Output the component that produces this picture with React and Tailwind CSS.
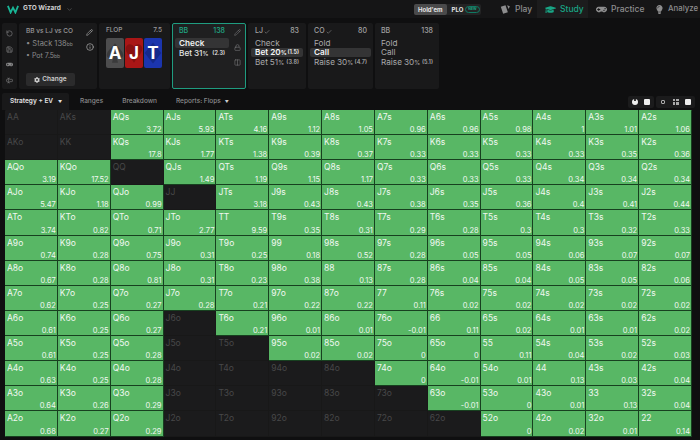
import { ChevronDown, Columns2, Info, Lock, Pencil, RotateCcw, Save, TextCursorInput, Check } from 'lucide-react'
import { FaCog, FaGamepad, FaGraduationCap, FaLightbulb } from 'react-icons/fa'

const ranks = ['A', 'K', 'Q', 'J', 'T', '9', '8', '7', '6', '5', '4', '3', '2']

const ev = [
  [null, null, '3.72', '5.93', '4.16', '1.12', '1.05', '0.96', '0.96', '0.98', '1', '1.01', '1.06'],
  [null, null, '17.8', '1.77', '1.38', '0.39', '0.37', '0.33', '0.33', '0.33', '0.33', '0.35', '0.36'],
  ['3.19', '17.52', null, '1.49', '1.19', '1.15', '1.17', '0.33', '0.33', '0.33', '0.34', '0.34', '0.34'],
  ['5.47', '1.18', '0.99', null, '3.18', '0.43', '0.43', '0.38', '0.35', '0.36', '0.4', '0.41', '0.44'],
  ['3.74', '0.82', '0.71', '2.77', '9.59', '0.35', '0.31', '0.29', '0.28', '0.3', '0.3', '0.32', '0.33'],
  ['0.74', '0.28', '0.75', '0.31', '0.25', '0.18', '0.52', '0.28', '0.05', '0.05', '0.06', '0.07', '0.07'],
  ['0.67', '0.28', '0.81', '0.31', '0.23', '0.38', '0.13', '0.28', '0.04', '0.04', '0.05', '0.05', '0.06'],
  ['0.62', '0.25', '0.27', '0.28', '0.21', '0.22', '0.22', '0.11', '0.02', '0.02', '0.02', '0.02', '0.02'],
  ['0.61', '0.25', '0.27', null, '0.21', '0.01', '0.01', '-0.01', '0.11', '0.02', '0.01', '0.01', '0.02'],
  ['0.61', '0.25', '0.28', null, null, '0.02', '0.02', '0', '0', '0.11', '0.04', '0.02', '0.03'],
  ['0.63', '0.25', '0.28', null, null, null, null, '0', '-0.01', '0.01', '0.13', '0.03', '0.04'],
  ['0.64', '0.26', '0.29', null, null, null, null, null, '-0.01', '0', '0.01', '0.13', '0.04'],
  ['0.68', '0.27', '0.29', null, null, null, null, null, null, '0', '0.02', '0.01', '0.14'],
]

function handLabel(row, col) {
  if (row === col) return ranks[row] + ranks[col]
  if (row < col) return ranks[row] + ranks[col] + 's'
  return ranks[col] + ranks[row] + 'o'
}

function Cell({ label, value }) {
  if (value === null) {
    return (
      <div className="min-w-0 border-r border-b border-[#181818] bg-[#1b1b1c] px-[2px] pt-[1px] text-[8.5px] leading-[13px] text-[#484849]">
        {label}
      </div>
    )
  }
  return (
    <div className="flex min-w-0 flex-col justify-between border-r border-b border-[#17401f] bg-[#58b765] pt-[1px] pr-[1px] pl-[2px] text-[#f1f7f1]">
      <span className="text-[8.5px] leading-[13px]">{label}</span>
      <span className="text-right text-[7.5px] leading-[9px]">{value}</span>
    </div>
  )
}

function ActionRow({ name, pct, size, active, dim, wide }) {
  return (
    <div className={`flex h-[9.5px] items-center justify-between rounded-[2px] text-[8.2px] whitespace-nowrap ${wide ? '-mx-[4px] px-[4px]' : ''} ${active ? 'bg-[#343435] font-semibold text-[#f4f4f4]' : ''} ${dim ? 'text-[#a9a9aa]' : ''} ${!active && !dim ? 'font-medium text-[#e4e4e4]' : ''}`}>
      <span>
        {name}
        {pct && <span className="ml-[2px]">{pct}<span className="text-[6px]">%</span></span>}
      </span>
      {size && <span className="text-[5.5px] font-semibold">({size})</span>}
    </div>
  )
}

function PlayerHead({ name, stack, checked, teal }) {
  return (
    <div className={`mb-[1px] flex h-[11px] items-center justify-between text-[7px] font-medium ${teal ? 'text-[#1fa886]' : 'text-[#a3a3a4]'}`}>
      <span className="flex items-center gap-[1px]">
        {name}
        {checked && <Check size={6} strokeWidth={2} />}
      </span>
      <span>{stack}</span>
    </div>
  )
}

function BoardCard({ rank, bg, shade, path }) {
  return (
    <div className={`flex h-[30px] w-[18px] items-center justify-center overflow-hidden rounded-[2px] ${bg}`}>
      <span className="grid place-items-center">
        <svg viewBox="0 0 24 30" className={`col-start-1 row-start-1 h-[30px] w-[18px] ${shade}`} fill="currentColor">
          <path d={path} />
        </svg>
        <span className="col-start-1 row-start-1 text-[17px] leading-none font-bold text-white">{rank}</span>
      </span>
    </div>
  )
}

export default function App() {
  return (
    <div className="h-[440px] w-[700px] overflow-hidden bg-[#0f0f10] font-['Inter',sans-serif]">
      <header className="flex h-[18px] items-center justify-between bg-[#151516]">
        <div className="flex items-center pl-[7px]">
          <svg viewBox="0 0 20 14" className="h-[9px] w-[12px]" fill="none" stroke="#19b596" strokeWidth="3">
            <path d="M1.5 1 L6 12 L10 4 L14 12 L18.5 1" />
          </svg>
          <span className="ml-[4px] text-[6.5px] font-bold text-[#d0d0d0]">GTO Wizard</span>
          <ChevronDown size={7} className="ml-[5px] text-[#666]" />
        </div>
        <div className="flex items-center">
          <div className="flex h-[11px] w-[67px] items-center rounded-[2px] bg-[#232324] text-[6px] font-bold">
            <span className="flex h-[11px] items-center rounded-[2px] bg-[#4a4a4b] px-[4px] text-[#e6e6e6]">Hold'em</span>
            <span className="ml-[5px] text-[#e6e6e6]">PLO</span>
            <span className="ml-[2px] rounded-full border border-[#0f7a63] px-[2px] text-[3.5px] leading-[5px] text-[#19a585]">NEW</span>
          </div>
          <div className="flex h-[18px] w-[56px] items-center gap-[4px] pl-[19px] text-[8.5px] font-medium text-[#8d8d8e]">
            <svg viewBox="0 0 14 14" className="h-[11px] w-[11px] shrink-0" fill="#8d8d8e">
              <path d="M1 3.5 L7 1.5 L10 10.5 L4 12.5 Z" />
              <path d="M9 1.5 L12.5 3 L11 6.5 Z" />
            </svg>
            <span>Play</span>
          </div>
          <div className="flex h-[18px] w-[51px] items-center gap-[4px] bg-[#1c1c1d] pl-[8px] text-[8.5px] font-medium text-[#19a585]">
            <FaGraduationCap size={11} className="shrink-0" />
            <span>Study</span>
          </div>
          <div className="flex h-[18px] w-[59px] items-center gap-[4px] pl-[8px] text-[8.5px] font-medium text-[#8d8d8e]">
            <FaGamepad size={11} className="shrink-0" />
            <span>Practice</span>
          </div>
          <div className="flex h-[18px] w-[53px] items-center gap-[4px] pl-[8px] text-[7.8px] font-medium whitespace-nowrap text-[#8d8d8e]">
            <FaLightbulb size={9} className="shrink-0" />
            <span>Analyze</span>
          </div>
        </div>
      </header>

      <section className="mt-[5px] flex h-[66px] gap-[2px] pl-[2px]">
        <div className="flex w-[15px] flex-col items-center gap-[8.5px] rounded-[2px] bg-[#19191a] pt-[7px] text-[#8a8a8b]">
          <RotateCcw size={7} />
          <Save size={7} />
          <FaGamepad size={7} />
          <TextCursorInput size={7} />
        </div>

        <div className="flex w-[78px] rounded-[2px] bg-[#19191a]">
          <div className="flex w-[63px] flex-col justify-between pt-[3px] pb-[3px] pl-[7px]">
            <div>
              <p className="text-[6.5px] leading-[11px] font-medium whitespace-nowrap text-[#9a9a9b]">BB vs LJ vs CO</p>
              <p className="mt-[1px] text-[7.5px] leading-[11px] whitespace-nowrap text-[#8b8b8c]">• Stack 138<span className="text-[5px]">bb</span></p>
              <p className="text-[7px] leading-[11px] whitespace-nowrap text-[#8b8b8c]">• Pot 7.5<span className="text-[5px]">bb</span></p>
            </div>
            <div className="flex h-[13px] w-[49px] items-center justify-center gap-[2px] rounded-[2px] bg-[#2b2b2c] text-[6.5px] font-semibold text-[#cfcfcf]">
              <FaCog size={6} />
              Change
            </div>
          </div>
          <div className="flex w-[15px] flex-col items-center gap-[7px] pt-[6px] text-[#b5b5b5]">
            <Pencil size={7} />
            <Info size={8} />
          </div>
        </div>

        <div className="w-[71px] rounded-[2px] bg-[#19191a] px-[7px]">
          <div className="flex h-[15px] items-center justify-between pr-[1px] text-[6.5px] font-medium text-[#9a9a9b]">
            <span>FLOP</span>
            <span>7.5</span>
          </div>
          <div className="flex gap-[1px]">
            <BoardCard rank="A" bg="bg-[#4d4d4e]" shade="text-[#3a3a3b]" path="M12 2 C16 8 23 12 23 18 C23 22 17 23 14 20 L16 28 L8 28 L10 20 C7 23 1 22 1 18 C1 12 8 8 12 2 Z" />
            <BoardCard rank="J" bg="bg-[#a91616]" shade="text-[#871010]" path="M12 28 C7 20 1 15 1 9 C1 3 9 1 12 7 C15 1 23 3 23 9 C23 15 17 20 12 28 Z" />
            <BoardCard rank="T" bg="bg-[#1b35ae]" shade="text-[#15298a]" path="M12 1 L23 15 L12 29 L1 15 Z" />
          </div>
        </div>

        <div className="flex w-[74px] rounded-[2px] border border-[#1f9c80] bg-[#1f1f20]">
          <div className="w-[56px] pt-[2px] pl-[2px]">
            <div className="px-[4px]">
              <PlayerHead name="BB" stack="138" teal />
            </div>
            <div className="flex h-[9.5px] items-center rounded-[2px] bg-[#343435] px-[4px] text-[8.2px] font-semibold text-[#f0f0f0]">Check</div>
            <div className="mt-[0.5px] px-[4px]">
              <ActionRow name="Bet" pct="31" size="2.3" />
            </div>
          </div>
          <div className="flex flex-1 flex-col items-center gap-[8px] pt-[5px] text-[#777778]">
            <Pencil size={7} />
            <Lock size={7} />
            <Columns2 size={7} />
          </div>
        </div>

        <div className="w-[58px] rounded-[2px] bg-[#19191a] px-[7px] pt-[3px]">
          <PlayerHead name="LJ" stack="83" checked />
          <ActionRow name="Check" dim />
          <ActionRow name="Bet" pct="20" size="1.5" active wide />
          <ActionRow name="Bet" pct="51" size="3.8" dim />
        </div>

        <div className="w-[65px] rounded-[2px] bg-[#19191a] px-[6px] pt-[3px]">
          <PlayerHead name="CO" stack="80" checked />
          <ActionRow name="Fold" dim />
          <ActionRow name="Call" active wide />
          <ActionRow name="Raise" pct="30" size="4.7" dim />
        </div>

        <div className="w-[64px] rounded-[2px] bg-[#19191a] px-[6px] pt-[3px]">
          <PlayerHead name="BB" stack="138" />
          <ActionRow name="Fold" dim />
          <ActionRow name="Call" dim />
          <ActionRow name="Raise" pct="30" size="5.1" dim />
        </div>
      </section>

      <nav className="mt-[4px] flex h-[17px] items-center justify-between pl-[2px] text-[6.5px] font-medium text-[#8b8b8c]">
        <div className="flex h-full items-center">
          <div className="flex h-full w-[67px] items-center gap-[5px] rounded-t-[2px] bg-[#19191a] pl-[8px] font-semibold text-[#e2e2e2]">
            Strategy + EV
            <span className="text-[4px]">▼</span>
          </div>
          <span className="ml-[11px]">Ranges</span>
          <span className="ml-[19px]">Breakdown</span>
          <span className="ml-[19px] flex items-center gap-[4px]">
            Reports: Flops
            <span className="text-[4px] text-[#cfcfcf]">▼</span>
          </span>
        </div>
        <div className="mr-[5px] flex h-[12px] items-center gap-[2px]">
          <div className="flex h-full items-center gap-[6px] rounded-[2px] bg-[#1b1b1c] px-[4px]">
            <span className="flex h-[6px] w-[6px] items-start justify-center rounded-full bg-[#eee]">
              <span className="h-[2px] w-[2px] bg-[#333]" />
            </span>
            <span className="h-[6px] w-[6px] rounded-[1px] bg-[#eee]" />
          </div>
          <div className="flex h-full items-center gap-[6.5px] rounded-[2px] bg-[#1b1b1c] px-[4px]">
            <span className="flex h-[6px] w-[6px] items-center justify-center">
              <span className="h-[4px] w-[4px] rounded-[1px] border border-[#aaa]" />
            </span>
            <span className="grid h-[6px] w-[6px] grid-cols-2 gap-[1px]">
              <span className="bg-[#aaa]" />
              <span className="bg-[#aaa]" />
              <span className="bg-[#aaa]" />
              <span className="bg-[#aaa]" />
            </span>
            <span className="h-[6px] w-[6px] rounded-[1px] bg-[#eee]" />
          </div>
        </div>
      </nav>

      <main className="ml-[5px] grid h-[326.5px] w-[687px] grid-cols-13 grid-rows-13 overflow-hidden rounded-[1px]">
        {ev.map((row, r) =>
          row.map((value, c) => <Cell key={`${r}-${c}`} label={handLabel(r, c)} value={value} />)
        )}
      </main>
    </div>
  )
}
